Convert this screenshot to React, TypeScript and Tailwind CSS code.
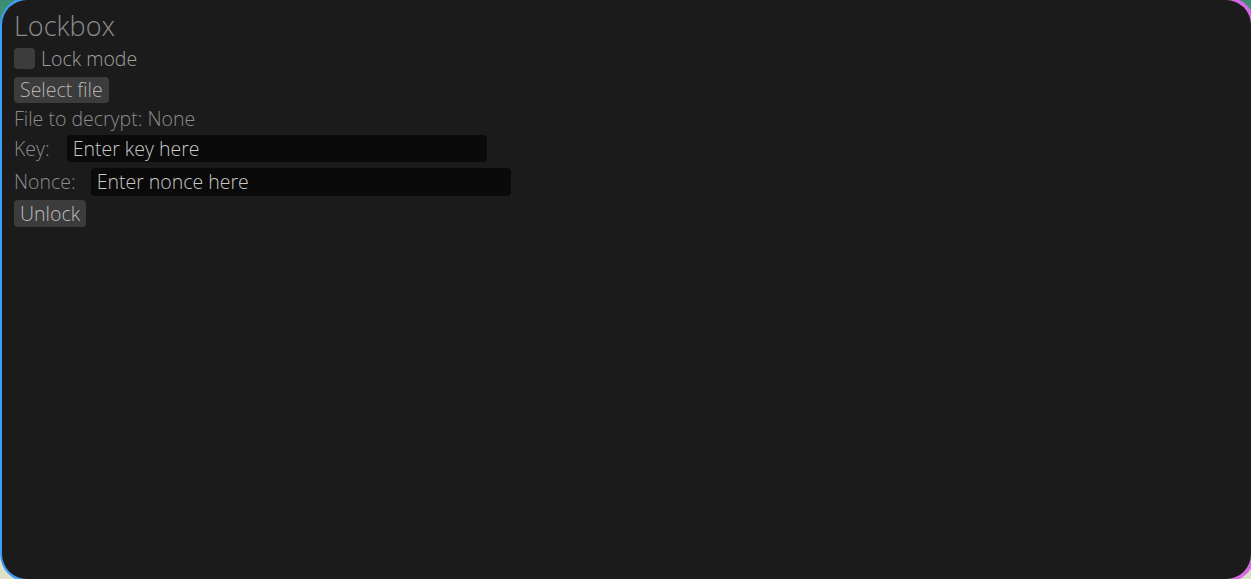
import React from 'react';

const font = { fontFamily: '"Open Sans", "Noto Sans", sans-serif' };

const App: React.FC = () => {
  return (
    <div className="h-screen w-full overflow-hidden bg-gradient-to-b from-[#3a8c70] via-[#cfd8c0] to-[#dde1c8]" style={font}>
      {/* Window frame with gradient ring */}
      <div className="-mt-[3px] h-[calc(100%+6px)] w-[calc(100%+4px)] rounded-[28px] bg-gradient-to-r from-[#3e9cf4] via-[#8f7fe6] to-[#d66ae2] py-[3px] pr-[4px] pl-[2px]">
        <div className="h-full w-full rounded-[25px] bg-[#1b1b1b] px-[12px] pt-[8px] font-light text-[#8c8c8c]">
          {/* Heading */}
          <h1 className="text-[27px] leading-[36px] font-light">Lockbox</h1>

          {/* Lock mode checkbox */}
          <label className="mt-[4px] flex h-[21px] items-center gap-[6px]">
            <span className="block size-[21px] rounded-[4px] bg-[#3c3c3c]" />
            <span className="text-[19.5px] leading-[21px] text-[#a0a0a0]">Lock mode</span>
          </label>

          {/* Select file */}
          <button className="mt-[8px] flex h-[26px] items-center rounded-[4px] bg-[#3c3c3c] px-[6px] text-[19.5px] font-light leading-[26px] text-[#b4b4b4]">
            Select file
          </button>

          <div className="mt-[6px] h-[20px] text-[19.5px] leading-[20px]">File to decrypt: None</div>

          {/* Key */}
          <div className="mt-[6px] flex h-[27px] items-center gap-[17px]">
            <span className="text-[19.5px]">Key:</span>
            <div className="flex h-[27px] w-[420px] items-center rounded-[4px] bg-[#0a0a0a] px-[6px] text-[19.5px] text-[#c8c8c8]">
              Enter key here
            </div>
          </div>

          {/* Nonce */}
          <div className="mt-[6px] flex h-[28px] items-center gap-[15px]">
            <span className="text-[19.5px]">Nonce:</span>
            <div className="flex h-[28px] w-[420px] items-center rounded-[4px] bg-[#0a0a0a] px-[6px] text-[19.5px] text-[#c8c8c8]">
              Enter nonce here
            </div>
          </div>

          {/* Unlock */}
          <button className="mt-[4px] flex h-[27px] items-center rounded-[4px] bg-[#3c3c3c] px-[6px] text-[19.5px] font-light leading-[27px] text-[#bcbcbc]">
            Unlock
          </button>
        </div>
      </div>
    </div>
  );
};

export default App;
